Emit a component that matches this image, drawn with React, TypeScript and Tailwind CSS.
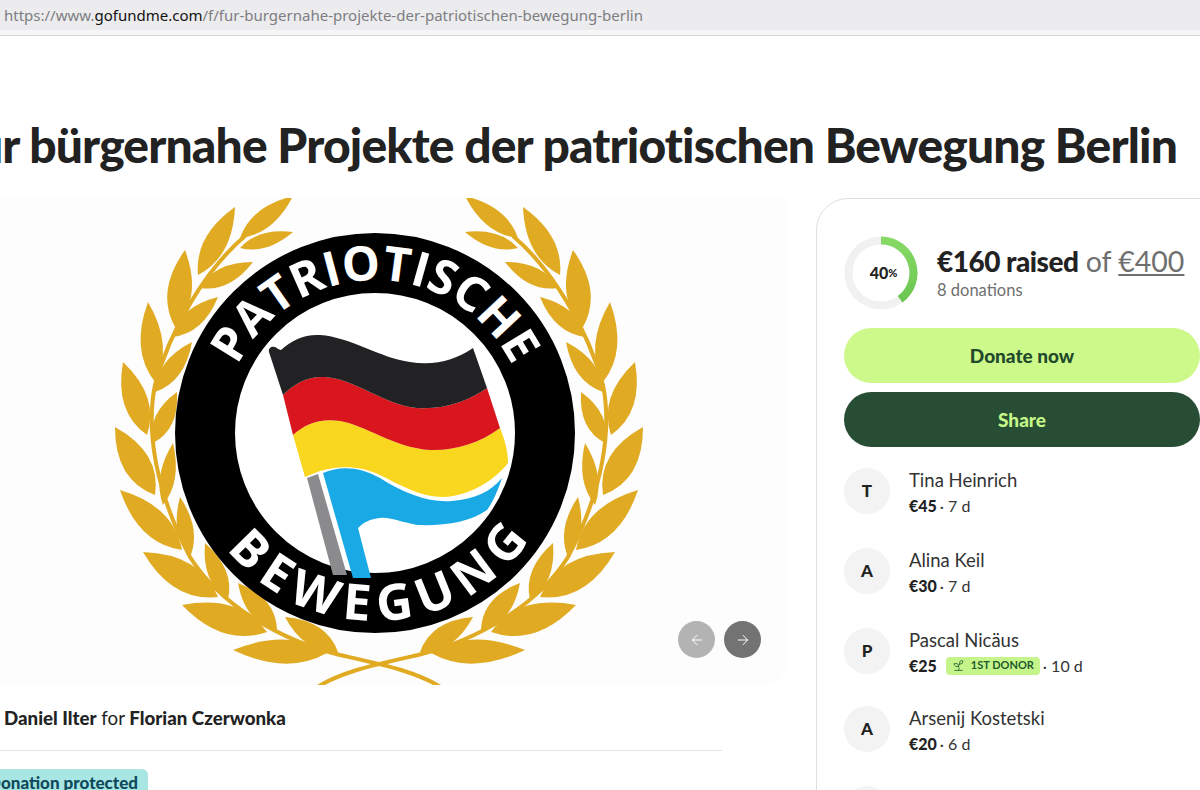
import React from 'react';
import { ArrowLeft, ArrowRight, Sprout } from 'lucide-react';

type Leaf = [number, number, number, number, number];

// base x, base y, tip x, tip y, width
const leaves: Leaf[] = [
  [240, 238, 293, 196, 18],
  [240, 248, 293, 232, 14],
  [198, 275, 235, 207, 22],
  [200, 288, 253, 262, 17],
  [175, 327, 185, 250, 24],
  [172, 337, 218, 297, 18],
  [155, 382, 148, 302, 22],
  [155, 392, 192, 342, 18],
  [147, 435, 123, 362, 24],
  [153, 443, 177, 392, 18],
  [155, 495, 115, 427, 27],
  [163, 505, 173, 443, 15],
  [182, 550, 120, 490, 26],
  [190, 557, 180, 497, 16],
  [218, 597, 143, 552, 28],
  [228, 600, 205, 543, 18],
  [267, 632, 182, 605, 28],
  [277, 630, 238, 583, 20],
  [327, 653, 233, 650, 24],
  [338, 652, 285, 617, 20],
];

function leafPath([bx, by, tx, ty, w]: Leaf) {
  const dx = tx - bx;
  const dy = ty - by;
  const len = Math.hypot(dx, dy);
  const nx = (-dy / len) * w;
  const ny = (dx / len) * w;
  const mx = bx + dx * 0.42;
  const my = by + dy * 0.42;
  return `M${bx} ${by}Q${mx + nx} ${my + ny} ${tx} ${ty}Q${mx - nx} ${my - ny} ${bx} ${by}Z`;
}

const Laurel = () => (
  <g fill="#e0ab22">
    {leaves.map((leaf, i) => (
      <path key={i} d={leafPath(leaf)} />
    ))}
    <path
      d="M245 236C205 270 170 330 155 385C146 430 155 490 190 557C220 605 280 640 340 655C380 664 420 672 445 690"
      fill="none"
      stroke="#e0ab22"
      strokeWidth="4"
    />
  </g>
);

const Logo = () => (
  <svg viewBox="0 198 787 487" className="block w-full h-full">
    <Laurel />
    <g transform="translate(758 0) scale(-1 1)">
      <Laurel />
    </g>

    <circle cx="375" cy="433" r="170" fill="#fff" stroke="#000" strokeWidth="60" />
    <defs>
      <path id="ring-top" d="M222 433A153 153 0 0 1 528 433" />
      <path id="ring-bottom" d="M187 433A188 188 0 0 0 563 433" />
    </defs>
    <text fill="#fff" fontFamily="'Open Sans', sans-serif" fontWeight="700" fontSize="48" textAnchor="middle">
      <textPath href="#ring-top" startOffset="50%">PATRIOTISCHE</textPath>
    </text>
    <text fill="#fff" fontFamily="'Open Sans', sans-serif" fontWeight="700" fontSize="50" letterSpacing="9" textAnchor="middle">
      <textPath href="#ring-bottom" startOffset="51.7%">BEWEGUNG</textPath>
    </text>

    <path d="M307 478L318 474L347 575L333 575Z" fill="#8b8b8d" />
    <path
      d="M323 473C340 466 358 466 380 478C405 494 430 503 452 501C475 499 490 492 502 478C498 490 493 502 487 510C470 522 445 526 417 525C400 522 390 517 380 518C370 519 364 522 358 528L371 578L353 578Z"
      fill="#19a9e5"
    />
    <path
      d="M293 435C305 424 320 418 340 421C365 425 395 448 430 450C455 451 480 443 500 428C505 440 508 452 508 463C495 480 470 496 443 497C420 497 400 485 380 475C358 465 338 466 320 471L305 477Z"
      fill="#f9d71f"
    />
    <path
      d="M283 395C295 383 308 376 325 377C355 379 385 405 417 408C445 410 470 400 487 388L500 428C480 443 455 451 430 450C395 448 365 425 340 421C320 418 305 424 293 435Z"
      fill="#d9161d"
    />
    <path
      d="M269 352C268 347 274 345 278 349L281 350C292 340 305 334 320 335C350 337 380 358 410 362C435 366 455 360 473 348L487 388C470 400 445 410 417 408C385 405 355 379 325 377C308 376 295 383 283 395Z"
      fill="#222224"
    />
  </svg>
);

type Donor = { initial: string; name: string; amount: string; age: string; first?: boolean; row: string };

const donors: Donor[] = [
  { initial: 'T', name: 'Tina Heinrich', amount: '€45', age: '7 d', row: 'mt-[21px]' },
  { initial: 'A', name: 'Alina Keil', amount: '€30', age: '7 d', row: 'mt-[30px]' },
  { initial: 'P', name: 'Pascal Nicäus', amount: '€25', age: '10 d', first: true, row: 'mt-[30px]' },
  { initial: 'A', name: 'Arsenij Kostetski', amount: '€20', age: '6 d', row: 'mt-[28px]' },
];

function DonorRow({ donor }: { donor: Donor }) {
  return (
    <div className={`flex items-start gap-[19px] ${donor.row}`}>
      <div className="w-[46px] h-[46px] rounded-full bg-[#f3f3f3] flex items-center justify-center text-[17px] font-black text-[#222]">
        {donor.initial}
      </div>
      <div className="-mt-[1px]">
        <div className="text-[18.5px] leading-[26px] text-[#333]">{donor.name}</div>
        <div className="flex items-center h-[25px] text-[16px] text-[#333]">
          <span className="font-black text-[#222]">{donor.amount}</span>
          {donor.first && (
            <span className="ml-[9px] h-[18px] w-[94px] rounded bg-[#c5f58a] flex items-center justify-center gap-[6px] text-[11px] font-bold text-[#1f5a2d]">
              <Sprout size={13} strokeWidth={1.5} />
              1ST DONOR
            </span>
          )}
          <span className="ml-[3px]">· {donor.age}</span>
        </div>
      </div>
    </div>
  );
}

export default function App() {
  return (
    <div className="w-[1200px] h-[790px] overflow-hidden bg-white font-['Lato',sans-serif] text-[#222]">
      <div className="h-[36px] bg-[#f6f6f7] border-b border-[#d4d4d9]">
        <div className="h-[30px] bg-[#ececee] pl-[4px] flex items-center font-['Noto_Sans',sans-serif] text-[15px] text-[#7d7e82]">
          https://www.<span className="text-[#111]">gofundme.com</span>/f/fur-burgernahe-projekte-der-patriotischen-bewegung-berlin
        </div>
      </div>

      <div className="h-[162px] pt-[83px] pr-[23px] flex justify-end">
        <h1 className="whitespace-nowrap text-[48px] leading-[52px] font-black text-[#222] tracking-[-0.85px]">
          Für bürgernahe Projekte der patriotischen Bewegung Berlin
        </h1>
      </div>

      <div className="flex items-start">
        <div className="w-[787px] shrink-0">
          <div className="relative h-[487px] bg-[#fdfdfd] rounded-br-[24px] overflow-hidden">
            <Logo />
            <div className="absolute left-[678px] top-[423px] flex gap-[9px]">
              <button className="w-[37px] h-[37px] rounded-full bg-[#b3b3b3] flex items-center justify-center text-white">
                <ArrowLeft size={16} strokeWidth={1.5} />
              </button>
              <button className="w-[37px] h-[37px] rounded-full bg-[#737373] flex items-center justify-center text-white">
                <ArrowRight size={16} strokeWidth={1.5} />
              </button>
            </div>
          </div>

          <div className="mt-[21px] pl-[4px] text-[18.7px] leading-[24px]">
            <b className="font-black">Daniel Ilter</b> for <b className="font-black">Florian Czerwonka</b>
          </div>
          <div className="mt-[20px] w-[722px] border-t border-[#e3e3e3]" />
          <div className="mt-[18px] -ml-[20px] w-[168px] h-[30px] rounded-md bg-[#a8e6e3] pr-[10px] text-right text-[17px] leading-[28px] font-black text-[#0f4a5c] whitespace-nowrap">
            Donation protected
          </div>
        </div>

        <div className="ml-[29px] w-[412px] shrink-0 h-[640px] rounded-tl-[32px] border border-[#dfdfdf] pl-[27px] pr-[27px] pt-[37px]">
          <div className="flex items-center gap-[19px]">
            <div className="relative w-[74px] h-[74px] shrink-0">
              <svg viewBox="0 0 74 74" className="w-full h-full">
                <defs>
                  <linearGradient id="ring-green" x1="0" y1="0" x2="0" y2="1">
                    <stop offset="0" stopColor="#86d964" />
                    <stop offset="1" stopColor="#6cc652" />
                  </linearGradient>
                </defs>
                <circle cx="37" cy="37" r="32.5" fill="none" stroke="#f1f1f1" strokeWidth="8" />
                <path d="M37 4.5A32.5 32.5 0 0 1 56.1 63.3" fill="none" stroke="url(#ring-green)" strokeWidth="8" />
              </svg>
              <div className="absolute inset-0 flex items-center justify-center pl-[5px] text-[16px] font-black">
                40<span className="text-[11px]">%</span>
              </div>
            </div>
            <div className="-mt-[2px]">
              <div className="text-[28px] leading-[36px] whitespace-nowrap">
                <b className="font-black tracking-[-0.5px]">€160 raised</b>{' '}
                <span className="text-[28.5px] text-[#6f6f6f]">of <span className="underline underline-offset-2 decoration-[1.5px]">€400</span></span>
              </div>
              <div className="text-[16.5px] leading-[22px] text-[#6f6f6f]">8 donations</div>
            </div>
          </div>

          <button className="mt-[18px] block w-full h-[55px] pt-[1px] rounded-full bg-[#cdf98a] text-[19px] font-black text-[#1f4a2b]">Donate now</button>
          <button className="mt-[9px] block w-full h-[55px] pt-[1px] rounded-full bg-[#274d34] text-[19px] font-black text-[#c6f888]">Share</button>

          {donors.map((d, i) => (
            <DonorRow key={i} donor={d} />
          ))}
          <div className="mt-[30px] w-[46px] h-[46px] rounded-full bg-[#f3f3f3]" />
        </div>
      </div>
    </div>
  );
}
